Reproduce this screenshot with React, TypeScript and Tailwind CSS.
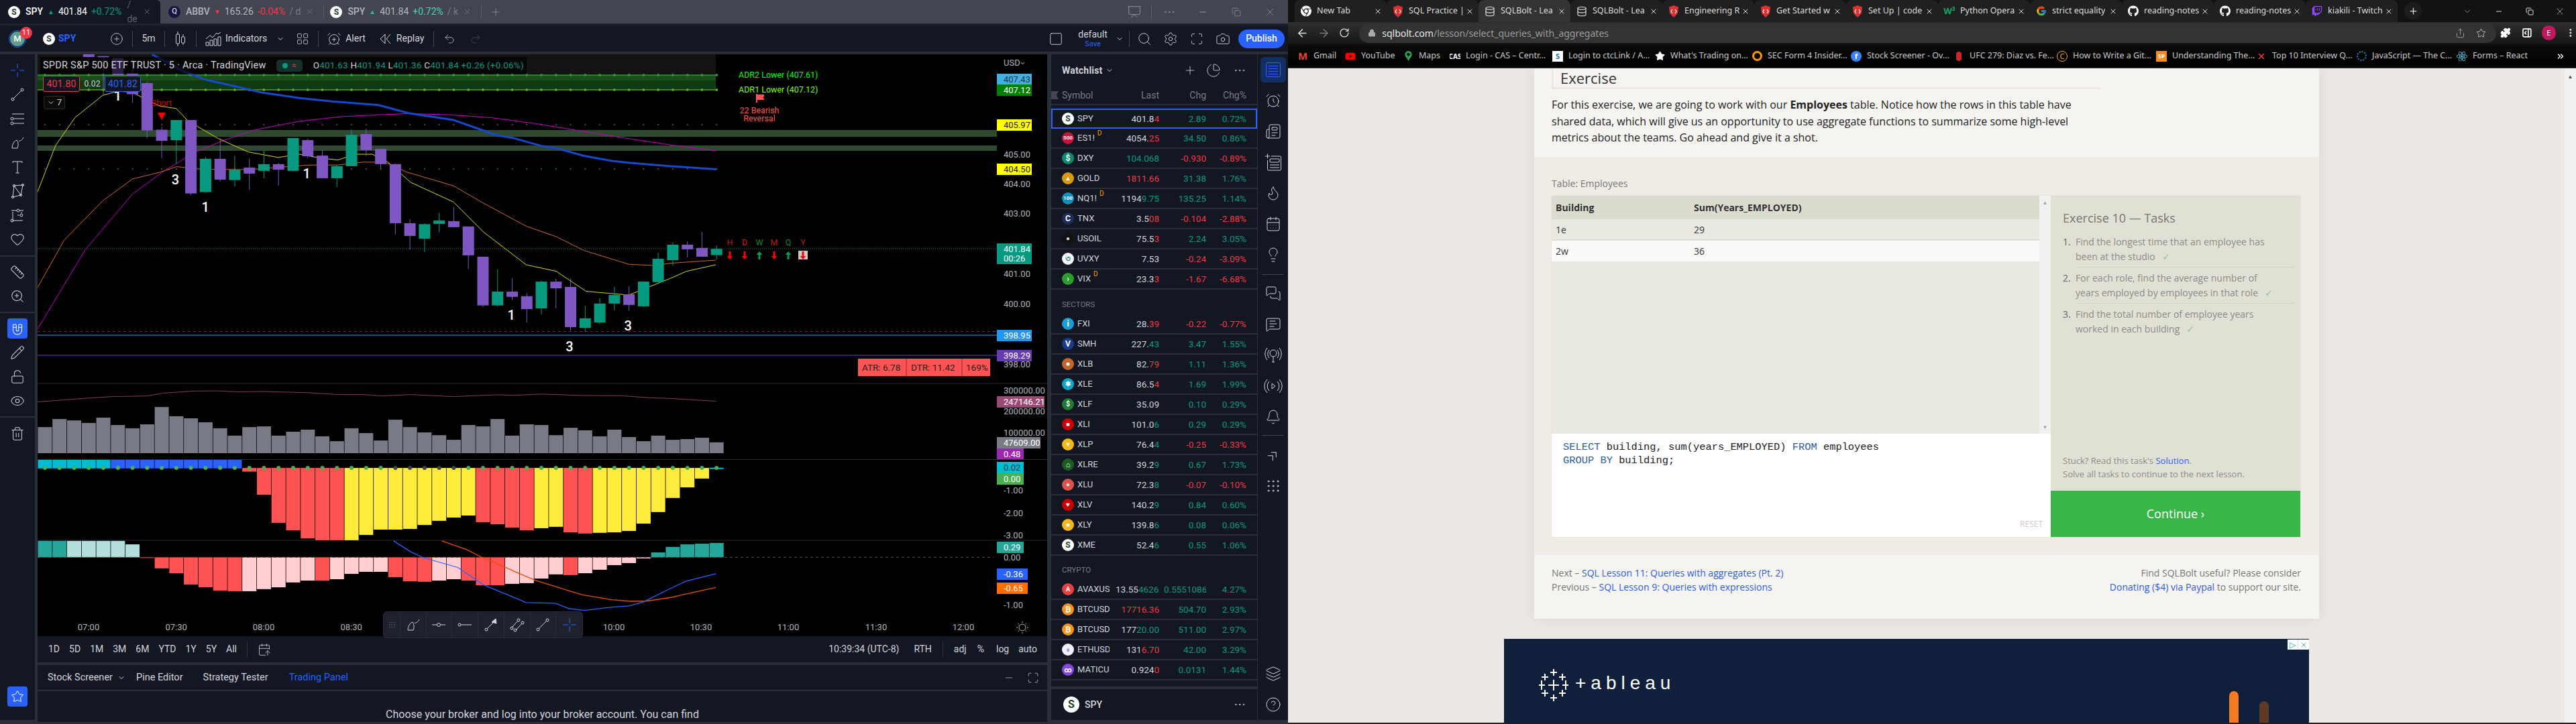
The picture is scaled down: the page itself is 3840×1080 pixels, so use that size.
import React from "react";
import {
  AlarmClock, ArrowLeft, ArrowRight, Bell, CalendarDays, Camera, ChevronDown, ChevronsRight, CircleHelp,
  Database, Ellipsis, EllipsisVertical, Eye, Flame, Heart, Layers, Lightbulb, Lock, LockOpen, Magnet, Maximize, MessageSquareText,
  MessagesSquare, Minus, Newspaper, PanelRightOpen, Pencil, Plus, PlusCircle, Presentation, Puzzle, Redo2, RotateCw, Ruler,
  Search, Settings, Share, Square, Star, Trash2, Undo2, X, ZoomIn, ChartPie, LayoutGrid, AlarmClockPlus, Grip, Copy, CalendarArrowUp,
} from "lucide-react";
import { FaChrome, FaGithub, FaReact, FaTwitch, FaYoutube } from "react-icons/fa";
import { FcGoogle } from "react-icons/fc";
import { SiGooglemaps } from "react-icons/si";

const TEAL = "#089981";
const RED = "#f23645";

/* ---------- chart data (digitised on a 1.568 x 2.904 grid) ---------- */
const zx = (v: number) => v / 1.568;
const zy = (v: number) => v / 2.904;
const ly = (v: number) => 540 + v / 2.904;
const barX = (i: number) => (105 + 34.13 * i) / 1.568;
const pts = (a: number[][], lower = false) => a.map(([x, y]) => `${zx(x)},${lower ? ly(y) : zy(y)}`).join(" ");

const candles: [string, number, number, number, number][] = [
  ["p", 235, 247, 235, 290], ["p", 243, 250, 243, 415], ["p", 252, 325, 252, 400], ["p", 318, 408, 250, 445], ["p", 360, 565, 355, 598],
  ["p", 562, 610, 550, 685], ["g", 520, 607, 520, 710], ["p", 520, 838, 520, 845], ["g", 688, 832, 680, 835], ["p", 688, 778, 598, 786],
  ["g", 735, 780, 675, 808], ["p", 726, 752, 688, 822], ["g", 711, 740, 652, 772], ["p", 711, 735, 705, 804], ["g", 598, 740, 598, 742],
  ["p", 607, 677, 600, 686], ["p", 674, 772, 650, 772], ["g", 720, 772, 715, 810], ["g", 584, 720, 560, 720], ["p", 581, 650, 558, 676],
  ["p", 645, 711, 645, 730], ["p", 711, 967, 708, 1016], ["p", 967, 1022, 950, 1082], ["g", 971, 1034, 968, 1092], ["g", 955, 970, 923, 1005],
  ["p", 958, 984, 897, 985], ["p", 981, 1106, 981, 1165], ["p", 1112, 1323, 1112, 1330], ["g", 1263, 1323, 1167, 1328], ["p", 1263, 1286, 1205, 1300],
  ["p", 1283, 1339, 1270, 1397], ["g", 1220, 1336, 1216, 1362], ["p", 1220, 1249, 1207, 1336], ["p", 1243, 1417, 1205, 1432], ["g", 1379, 1420, 1325, 1436],
  ["g", 1315, 1397, 1292, 1402], ["g", 1278, 1315, 1243, 1344], ["p", 1275, 1321, 1240, 1344], ["g", 1220, 1327, 1218, 1330], ["g", 1121, 1222, 1095, 1222],
  ["g", 1060, 1127, 1050, 1150], ["p", 1060, 1080, 1045, 1115], ["p", 1074, 1112, 1005, 1112], ["g", 1078, 1105, 1063, 1125],
];

const volTops = [282,247,253,264,241,273,287,270,195,235,244,261,287,319,282,279,319,302,293,322,343,287,308,340,250,282,305,317,337,273,279,247,319,270,273,317,285,296,322,293,325,343,319,337,334,328,348];

const squeeze: [number, string][] = [
  [475,"r"],[575,"r"],[697,"r"],[729,"r"],[764,"r"],[772,"r"],[772,"r"],[772,"y"],[749,"y"],[726,"y"],[726,"y"],[723,"y"],[706,"y"],[688,"y"],[674,"y"],[665,"y"],
  [694,"r"],[703,"r"],[717,"r"],[729,"r"],[720,"y"],[714,"y"],[738,"r"],[743,"r"],[740,"y"],[738,"y"],[732,"y"],[700,"y"],[650,"y"],[589,"y"],[543,"y"],[505,"y"],
];

const macd: [number, string][] = [
  [775,"t"],[775,"t"],[775,"l"],[775,"l"],[775,"l"],[775,"l"],[790,"l"],[849,"r"],[894,"r"],[915,"r"],[964,"r"],[976,"r"],[990,"r"],[993,"r"],[993,"p"],[984,"p"],[976,"p"],[955,"p"],[947,"p"],
  [947,"r"],[941,"p"],[918,"p"],[909,"p"],[909,"p"],[932,"r"],[950,"r"],[952,"r"],[947,"p"],[941,"p"],[947,"r"],[967,"r"],[967,"r"],[961,"p"],[958,"p"],[938,"p"],[920,"p"],[923,"r"],[915,"p"],[900,"p"],[880,"p"],[871,"p"],[851,"p"],
  [825,"t"],[801,"t"],[790,"t"],[787,"t"],[784,"t"],
];
const macdFill: Record<string, string> = { t: "#26a69a", l: "#b2dfdb", r: "#ff5252", p: "#ffcdd2" };

const tags: [string, number, number, string, string, number][] = [
  ["407.43", 110, 16, "#3fb1e5", "#23333c", 52], ["407.12", 126, 17, "#008000", "#ffffff", 52], ["405.97", 178, 17, "#ffff00", "#222222", 52], ["404.50", 244, 17, "#ffff00", "#222222", 52],
  ["398.95", 492, 17, "#2196f3", "#ffffff", 52], ["398.29", 522, 17, "#673ab7", "#ffffff", 52],
  ["247146.21", 591, 17, "#9c4a73", "#ffffff", 71], ["47609.00", 652, 17, "#787b86", "#ffffff", 65], ["0.48", 669, 16, "#9c27b0", "#ffffff", 40],
  ["0.02", 689, 17, "#00bcd4", "#14343a", 40], ["0.00", 706, 17, "#4caf50", "#ffffff", 40], ["0.29", 808, 17, "#26a69a", "#ffffff", 40],
  ["-0.36", 848, 17, "#2962ff", "#ffffff", 46], ["-0.65", 869, 17, "#ff6d00", "#ffffff", 46],
];
const scaleText: [string, number][] = [["405.00",230],["404.00",274.5],["403.00",318.5],["401.00",408.5],["400.00",453.5],["398.00",543],["300000.00",582],["200000.00",613],["100000.00",645],["-1.00",731.7],["-2.00",765],["-3.00",798],["0.00",831],["-1.00",902]];

function ChartSvg() {
  return (
    <svg viewBox="56 81 1505 868" width={1505} height={868} className="block" fontFamily="Roboto,sans-serif">
      <rect x="56" y="81" width="1505" height="868" fill="#000" />
      <rect x="56" y="81" width="1011" height="31" fill="#131313" />
      <rect x="56" y="112" width="1011" height="8" fill="#1d4d1d" />
      <rect x="56" y="120" width="1011" height="14" fill="#0f3b0f" />
      <rect x="56" y="194" width="1430" height="10" fill="#2f4a30" />
      <rect x="56" y="217" width="1430" height="8" fill="#2f4a30" />
      <line x1="56" x2="1067" y1="112" y2="112" stroke="#31d331" strokeWidth="1" />
      <line x1="56" x2="1067" y1="134" y2="134" stroke="#7fe01a" strokeWidth="1" />
      {Array.from({ length: 47 }, (_, i) => (
        <g key={i}>
          <circle cx={barX(i)} cy="112" r="2" fill="#2a9a2a" />
          <circle cx={barX(i)} cy="134" r="2" fill="#5da514" />
          <circle cx={barX(i)} cy="186" r="1.2" fill="#4a4a1c" />
          <circle cx={barX(i)} cy="252" r="1.2" fill="#4a4a1c" />
        </g>
      ))}
      <line x1="56" x2="1486" y1="371" y2="371" stroke="#089981" strokeDasharray="1 2" />
      <line x1="56" x2="1486" y1="494.5" y2="494.5" stroke="#880e4f" strokeDasharray="4 4" />
      <line x1="56" x2="1486" y1="500" y2="500" stroke="#1e6aa8" strokeWidth="1.5" />
      <line x1="56" x2="1486" y1="530" y2="530" stroke="#4a2a85" strokeWidth="1.5" />

      <polyline fill="none" stroke="#c800c8" strokeWidth="1" points={pts([[88,1425],[200,1080],[310,840],[380,745],[450,665],[520,610],[590,565],[700,525],[800,505],[950,492],[1050,497],[1150,510],[1250,535],[1350,565],[1450,595],[1568,628],[1673,653]])} />
      <polyline fill="none" stroke="#d2691e" strokeWidth="1" points={pts([[88,1245],[150,1040],[240,870],[310,775],[370,748],[413,722],[470,733],[580,735],[650,725],[720,715],[790,715],[850,702],[900,703],[950,745],[1060,805],[1130,880],[1230,980],[1300,1025],[1365,1085],[1470,1145],[1530,1150],[1568,1140],[1673,1127]])} />
      <polyline fill="none" stroke="#d8d800" strokeWidth="1" points={pts([[88,830],[130,630],[175,510],[240,413],[275,395],[310,400],[345,435],[375,460],[412,470],[440,525],[510,600],[580,658],[650,682],[700,668],[750,685],[790,693],[830,668],[870,668],[905,700],[960,790],[1060,875],[1130,1005],[1230,1147],[1300,1175],[1370,1262],[1470,1278],[1568,1205],[1605,1175],[1673,1147]])} />

      {candles.map(([c, t, b, wt, wb], k) => {
        const i = k + 3;
        const col = c === "p" ? "#7e57c2" : "#089981";
        return (
          <g key={k}>
            <line x1={barX(i)} x2={barX(i)} y1={zy(wt)} y2={zy(wb)} stroke={col} strokeWidth="1" />
            <rect x={barX(i) - 8.5} y={zy(t)} width="17" height={zy(b) - zy(t)} fill={col} />
          </g>
        );
      })}
      <polyline fill="none" stroke="#1848cc" strokeWidth="3" points={pts([[355,235],[430,310],[480,345],[560,378],[610,400],[700,425],[780,440],[885,455],[955,490],[1060,520],[1160,585],[1200,598],[1265,632],[1300,642],[1365,675],[1430,697],[1470,705],[1568,720],[1675,733]])} />

      {[[275,415,"1"],[410,778,"3"],[480,898,"1"],[717,752,"1"],[1195,1365,"1"],[1468,1412,"3"],[1331,1500,"3"]].map(([x, y, t], i) => (
        <text key={i} x={zx(x as number)} y={zy(y as number) + 7} textAnchor="middle" fill="#fff" fontSize="20" fontWeight="500">{t}</text>
      ))}
      <text x={zx(378)} y={zy(447) + 4} textAnchor="middle" fill="#d50000" fontSize="12.5">Short</text>
      <path d="M235 168h12l-6 11z" fill="#ff0000" />

      <text x="1101" y="116" fill="#00ff00" fontSize="12.5">ADR2 Lower (407.61)</text>
      <text x="1101" y="138" fill="#7cfc00" fontSize="12.5">ADR1 Lower (407.12)</text>
      <path d="M1127 140h2v13h-2zM1129 141h10v3l-2 1 2 2v2h-10z" fill="#ff5252" />
      <text x="1132" y="169" textAnchor="middle" fill="#ff5252" fontSize="12.5">22 Bearish</text>
      <text x="1132" y="181" textAnchor="middle" fill="#ff5252" fontSize="12.5">Reversal</text>

      {[["H",1088,"#b71c1c","d"],["D",1110,"#d01818","d"],["W",1132,"#0a8a3a","u"],["M",1154,"#b71c1c","d"],["Q",1175,"#0a8a3a","u"],["Y",1197,"#b71c1c","d"]].map(([t, x, c, d]) => {
        const xx = x as number;
        return (
          <g key={t as string}>
            <text x={xx} y="366" textAnchor="middle" fill={c as string} fontSize="12.5">{t}</text>
            {t === "Y" && <rect x={xx - 7} y="374" width="14" height="13" fill="#c9c9c9" />}
            {d === "d"
              ? <path d={`M${xx - 1.5} 375h3v7h3l-4.5 5-4.5-5h3z`} fill="#ff0000" />
              : <path d={`M${xx - 1.5} 387h3v-7h3l-4.5-5-4.5 5h3z`} fill="#089c4c" />}
          </g>
        );
      })}

      <line x1="56" x2="1561" y1="572" y2="572" stroke="#2a2e39" strokeWidth="1" />
      <line x1="56" x2="1561" y1="685.5" y2="685.5" stroke="#2a2e39" strokeWidth="1" />
      <line x1="56" x2="1561" y1="806" y2="806" stroke="#2a2e39" strokeWidth="1" />

      <polyline fill="none" stroke="#803a5f" strokeWidth="1" points={pts([[88,173],[200,157],[260,150],[345,147],[380,135],[450,126],[510,125],[550,129],[620,128],[720,133],[790,141],[850,141],[890,147],[960,141],[1060,150],[1160,142],[1200,144],[1265,139],[1360,145],[1450,146],[1520,155],[1568,158],[1673,170]], true)} />
      {volTops.map((t, i) => <rect key={i} x={barX(i) - 10.5} y={ly(t)} width="21" height={ly(395) - ly(t)} fill="#787b86" />)}

      {Array.from({ length: 14 }, (_, i) => <rect key={i} x={barX(i) - 10.5} y={ly(424)} width="21" height={ly(461) - ly(424)} fill={i < 5 ? "#00bcd4" : "#2962ff"} />)}
      {squeeze.map(([t, c], i) => <rect key={i} x={barX(i + 14) - 10.5} y={ly(459)} width="21" height={ly(t) - ly(459)} fill={c === "r" ? "#ff5252" : "#ffeb3b"} />)}
      <rect x={barX(46) - 10.5} y={ly(458)} width="21" height="2" fill="#00bcd4" />
      {Array.from({ length: 47 }, (_, i) => <ellipse key={i} cx={barX(i)} cy={ly(459)} rx="3" ry="3" fill={i >= 24 && i <= 28 ? "#434651" : "#4caf50"} />)}

      {macd.map(([t, c], i) => {
        const y0 = ly(846);
        const y1 = ly(t);
        return <rect key={i} x={barX(i) - 10.5} y={Math.min(y0, y1)} width="21" height={Math.abs(y1 - y0)} fill={macdFill[c]} />;
      })}
      <line x1="56" x2="1481" y1={ly(846)} y2={ly(846)} stroke="#555" strokeDasharray="4 4" />
      <polyline fill="none" stroke="#e65100" strokeWidth="1.3" points={pts([[1033,775],[1090,812],[1125,845],[1250,945],[1360,1008],[1430,1030],[1470,1036],[1510,1036],[1568,1020],[1603,1005],[1673,977]], true)} />
      <polyline fill="none" stroke="#2962ff" strokeWidth="1.3" points={pts([[920,775],[960,822],[990,848],[1070,890],[1130,965],[1230,1042],[1298,1045],[1330,1068],[1365,1076],[1430,1062],[1470,1057],[1503,1040],[1568,980],[1603,950],[1673,917]], true)} />

      <rect x="1279" y="535" width="197" height="26" fill="#ff5252" />
      <line x1="1351" x2="1351" y1="535" y2="561" stroke="#222" strokeWidth="0.6" />
      <line x1="1434" x2="1434" y1="535" y2="561" stroke="#222" strokeWidth="0.6" />
      <text x="1285" y="553" fill="#222" fontSize="13.5">ATR: 6.78</text>
      <text x="1358" y="553" fill="#222" fontSize="13.5">DTR: 11.42</text>
      <text x="1440" y="553" fill="#222" fontSize="13.5">169%</text>

      <text x="1496" y="98" fill="#b2b5be" fontSize="13">USD</text>
      <path d="M1522 93l2.5 3 2.5-3" fill="none" stroke="#b2b5be" />
      {scaleText.map(([t, y], i) => <text key={i} x="1496" y={y + 4.5} fill="#b2b5be" fontSize="13">{t}</text>)}
      {tags.map(([t, y, h, bg, fg, w]) => (
        <g key={t + y}>
          <rect x="1486" y={y} width={w} height={h} fill={bg} />
          <text x="1496" y={y + h / 2 + 4.5} fill={fg} fontSize="13">{t}</text>
        </g>
      ))}
      <rect x="1486" y="363" width="52" height="31" fill={TEAL} />
      <text x="1496" y="376" fill="#fff" fontSize="13">401.84</text>
      <text x="1496" y="390" fill="#fff" fontSize="13">00:26</text>

      {[["07:00",132],["07:30",262.7],["08:00",393],["08:30",523.6],["10:00",915],["10:30",1045],["11:00",1175],["11:30",1306],["12:00",1436]].map(([t, x]) => (
        <text key={t as string} x={x as number} y="939.5" textAnchor="middle" fill="#b2b5be" fontSize="13">{t}</text>
      ))}
      <g transform="translate(1524 936)" stroke="#b2b5be" fill="none">
        <circle r="5" />
        <path d="M0-9v2M0 7v2M-9 0h2M7 0h2M-6-6l1.5 1.5M4.5 4.5L6 6M-6 6l1.5-1.5M4.5-4.5L6-6" />
      </g>
    </svg>
  );
}

/* ---------- small helpers ---------- */
function SLogo({ size = "s" }: { size?: "s" | "l" }) {
  return (
    <span className={size === "s" ? "flex h-[18px] w-[18px] shrink-0 items-center justify-center rounded-full bg-white text-[12px] font-bold leading-none text-[#1e3a2f]" : "flex h-[24px] w-[24px] shrink-0 items-center justify-center rounded-full bg-white text-[16px] font-bold leading-none text-[#1e3a2f]"}>S</span>
  );
}

function RailBtn({ children, active }: { children: React.ReactNode; active?: boolean }) {
  return (
    <div className="flex h-[36px] w-full items-center justify-center">
      <div className={active ? "flex h-[30px] w-[30px] items-center justify-center rounded-[4px] bg-[#2962ff] text-white" : "flex h-[30px] w-[30px] items-center justify-center text-[#d1d4dc]"}>{children}</div>
    </div>
  );
}

function LeftRail() {
  const s = { size: 22, strokeWidth: 1.1 };
  return (
    <div className="flex w-[52px] shrink-0 flex-col bg-[#131722] pb-[17px]">
      <div className="pt-[6px]">
        <RailBtn>
          <svg width="22" height="22" viewBox="0 0 22 22" fill="none"><path d="M11 1v7M11 14v7M1 11h7M14 11h7" stroke="#2962ff" /></svg>
        </RailBtn>
        <RailBtn><svg width="24" height="24" viewBox="0 0 24 24" fill="none" stroke="currentColor"><path d="M6 18L18 6" /><circle cx="5" cy="19" r="2" /><circle cx="19" cy="5" r="2" /></svg></RailBtn>
        <RailBtn><svg width="24" height="24" viewBox="0 0 24 24" fill="none" stroke="currentColor"><path d="M4 5h18M6 12h16M6 19h16" /><circle cx="4" cy="12" r="2" /><circle cx="4" cy="19" r="2" /></svg></RailBtn>
        <RailBtn><svg width="24" height="24" viewBox="0 0 24 24" fill="none" stroke="currentColor"><path d="M4 20c0-5 3-11 7-12 2 3 3 7 1 12zM14 9c2 1 5-1 7-5" /></svg></RailBtn>
        <RailBtn><svg width="24" height="24" viewBox="0 0 24 24" fill="none" stroke="currentColor"><path d="M5 6V4h14v2M12 4v17M9.5 21h5" /></svg></RailBtn>
        <RailBtn><svg width="24" height="24" viewBox="0 0 24 24" fill="none" stroke="currentColor"><path d="M5 21L7 4l10 14L20 3M5 21l12-3M7 4l13-1" /><circle cx="5" cy="21" r="1.6" /><circle cx="7" cy="4" r="1.6" /><circle cx="17" cy="18" r="1.6" /><circle cx="20" cy="3" r="1.6" /></svg></RailBtn>
        <RailBtn><svg width="24" height="24" viewBox="0 0 24 24" fill="none" stroke="currentColor"><path d="M3 5h8M15 5h6M4 20h16M12 12h3M5 7v11M18 7v2" /><circle cx="4" cy="20" r="2" /><circle cx="13" cy="5" r="2" /><circle cx="18" cy="12" r="2" /></svg></RailBtn>
        <RailBtn><Heart {...s} /></RailBtn>
      </div>
      <div className="mt-[6px] h-[2px] bg-[#2a2e39]" />
      <div className="pt-[5px]">
        <RailBtn><Ruler {...s} /></RailBtn>
        <RailBtn><ZoomIn {...s} /></RailBtn>
      </div>
      <div className="mt-[5px] h-[2px] bg-[#2a2e39]" />
      <div className="pt-[5px]">
        <RailBtn active><Magnet size={20} strokeWidth={1.2} className="rotate-[135deg]" /></RailBtn>
        <RailBtn><Pencil {...s} /></RailBtn>
        <RailBtn><LockOpen {...s} /></RailBtn>
        <RailBtn><Eye {...s} /></RailBtn>
      </div>
      <div className="mt-[5px] h-[2px] bg-[#2a2e39]" />
      <div className="pt-[6px]">
        <RailBtn><Trash2 {...s} /></RailBtn>
      </div>
      <div className="mt-auto">
        <RailBtn active><Star size={20} strokeWidth={1.2} /></RailBtn>
      </div>
    </div>
  );
}

function RRBtn({ children, active }: { children: React.ReactNode; active?: boolean }) {
  return (
    <div className="flex h-[46px] w-full items-center justify-center">
      <div className={active ? "flex h-[38px] w-[38px] items-center justify-center rounded-[6px] bg-[#142e61] text-[#2962ff]" : "flex h-[38px] w-[38px] items-center justify-center text-[#d1d4dc]"}>{children}</div>
    </div>
  );
}

const PlayWaves = (
  <svg width="28" height="24" viewBox="0 0 28 24" fill="none" stroke="currentColor"><path d="M12 8l5 4-5 4z" /><path d="M8 5a10 10 0 0 0 0 14M20 5a10 10 0 0 1 0 14M5 2a14 14 0 0 0 0 20M23 2a14 14 0 0 1 0 20" /></svg>
);
const Bulb2 = (
  <svg width="28" height="24" viewBox="0 0 28 24" fill="none" stroke="currentColor"><circle cx="14" cy="9" r="5" /><path d="M14 14v8M12 22h4M8 4a9 9 0 0 0 0 12M20 4a9 9 0 0 1 0 12M5 1a14 14 0 0 0 0 18M23 1a14 14 0 0 1 0 18" /></svg>
);

function RightRail() {
  const s = { size: 24, strokeWidth: 1 };
  return (
    <div className="flex w-[45px] shrink-0 flex-col bg-[#131722]">
      <RRBtn active>
        <svg width="24" height="24" viewBox="0 0 24 24" fill="none" stroke="currentColor"><rect x="1.5" y="1.5" width="21" height="21" rx="2" /><path d="M5 6.5h14M5 10.5h14M5 14.5h14M5 18.5h14" /></svg>
      </RRBtn>
      <RRBtn><AlarmClock {...s} /></RRBtn>
      <RRBtn><Newspaper {...s} /></RRBtn>
      <RRBtn>
        <svg width="26" height="26" viewBox="0 0 26 26" fill="none" stroke="currentColor"><path d="M1 4h7M4.5 0.5v7M10 4h13a1.5 1.5 0 0 1 1.5 1.5v18a1.5 1.5 0 0 1-1.5 1.5H6a1.5 1.5 0 0 1-1.5-1.5V10" /><rect x="8" y="8" width="14" height="5" rx="1" /><path d="M8 17h14M8 21h14" /></svg>
      </RRBtn>
      <RRBtn><Flame {...s} /></RRBtn>
      <RRBtn><CalendarDays {...s} /></RRBtn>
      <RRBtn><Lightbulb {...s} /></RRBtn>
      <div className="mx-[6px] mt-[6px] mb-[5px] h-[1px] bg-[#434651]" />
      <RRBtn><MessagesSquare {...s} /></RRBtn>
      <RRBtn><MessageSquareText {...s} /></RRBtn>
      <RRBtn>{Bulb2}</RRBtn>
      <RRBtn>{PlayWaves}</RRBtn>
      <RRBtn><Bell {...s} /></RRBtn>
      <div className="mx-[6px] mt-[4px] mb-[6px] h-[1px] bg-[#434651]" />
      <RRBtn><ChevronsRight size={24} strokeWidth={1} className="-rotate-45" /></RRBtn>
      <RRBtn><Grip {...s} /></RRBtn>
      <div className="mt-auto" />
      <RRBtn><Layers {...s} /></RRBtn>
      <RRBtn><CircleHelp {...s} /></RRBtn>
    </div>
  );
}

type Row = { s: string; d?: boolean; a: string; b?: string; bc?: string; c: string; p: string; up: boolean; bg: string; g: string; fg?: string; fs?: string };

const U = TEAL;
const D = RED;
const R1: Row[] = [
  { s: "SPY", a: "401.8", b: "4", bc: D, c: "2.89", p: "0.72%", up: true, bg: "#ffffff", g: "S", fg: "#1e3a2f" },
  { s: "ES1!", d: true, a: "4054.", b: "25", bc: D, c: "34.50", p: "0.86%", up: true, bg: "#c2163a", g: "500", fs: "text-[8px]" },
  { s: "DXY", a: "", b: "104.068", bc: U, c: "-0.930", p: "-0.89%", up: false, bg: "#0d8a72", g: "$" },
  { s: "GOLD", a: "", b: "1811.66", bc: D, c: "31.38", p: "1.76%", up: true, bg: "#d99a0c", g: "▲", fs: "text-[9px]" },
  { s: "NQ1!", d: true, a: "1194", b: "9.75", bc: U, c: "135.25", p: "1.14%", up: true, bg: "#0e8fbf", g: "100", fs: "text-[8px]" },
  { s: "TNX", a: "3.5", b: "08", bc: D, c: "-0.104", p: "-2.88%", up: false, bg: "#1c2d5a", g: "C" },
  { s: "USOIL", a: "75.5", b: "3", bc: D, c: "2.24", p: "3.05%", up: true, bg: "#121212", g: "●", fs: "text-[9px]" },
  { s: "UVXY", a: "7.53", c: "-0.24", p: "-3.09%", up: false, bg: "#f4f6f6", g: "৩", fg: "#1c7c8c" },
  { s: "VIX", d: true, a: "23.3", b: "3", bc: D, c: "-1.67", p: "-6.68%", up: false, bg: "#2a9e2a", g: "›" },
];
const R2: Row[] = [
  { s: "FXI", a: "28.", b: "39", bc: D, c: "-0.22", p: "-0.77%", up: false, bg: "#1b9dd9", g: "i" },
  { s: "SMH", a: "227.", b: "43", bc: U, c: "3.47", p: "1.55%", up: true, bg: "#1b3a8c", g: "V" },
  { s: "XLB", a: "82.", b: "79", bc: D, c: "1.11", p: "1.36%", up: true, bg: "#c4662a", g: "■", fs: "text-[9px]" },
  { s: "XLE", a: "86.5", b: "4", bc: D, c: "1.69", p: "1.99%", up: true, bg: "#0ea5c9", g: "✱", fs: "text-[10px]" },
  { s: "XLF", a: "35.09", c: "0.10", p: "0.29%", up: true, bg: "#1e7a34", g: "$", fs: "text-[10px]" },
  { s: "XLI", a: "101.0", b: "6", bc: U, c: "0.29", p: "0.29%", up: true, bg: "#cc0000", g: "■", fs: "text-[9px]" },
  { s: "XLP", a: "76.4", b: "4", bc: U, c: "-0.25", p: "-0.33%", up: false, bg: "#f4b819", g: "▼", fs: "text-[9px]" },
  { s: "XLRE", a: "39.2", b: "9", bc: U, c: "0.67", p: "1.73%", up: true, bg: "#1b5e20", g: "⌂", fs: "text-[11px]" },
  { s: "XLU", a: "72.3", b: "8", bc: U, c: "-0.07", p: "-0.10%", up: false, bg: "#d9534f", g: "●", fs: "text-[9px]" },
  { s: "XLV", a: "140.2", b: "9", bc: U, c: "0.84", p: "0.60%", up: true, bg: "#cc0000", g: "♥", fs: "text-[10px]" },
  { s: "XLY", a: "139.8", b: "6", bc: U, c: "0.08", p: "0.06%", up: true, bg: "#f4b819", g: "■", fs: "text-[9px]" },
  { s: "XME", a: "52.4", b: "6", bc: U, c: "0.55", p: "1.06%", up: true, bg: "#ffffff", g: "S", fg: "#1e3a2f" },
];
const R3: Row[] = [
  { s: "AVAXUSD", a: "13.55", b: "46269", bc: U, c: "0.5551086", p: "4.27%", up: true, bg: "#e84142", g: "A", fs: "text-[9px]" },
  { s: "BTCUSD", a: "", b: "17716.36", bc: D, c: "504.70", p: "2.93%", up: true, bg: "#f7931a", g: "₿", fs: "text-[11px]" },
  { s: "BTCUSD", a: "177", b: "20.00", bc: U, c: "511.00", p: "2.97%", up: true, bg: "#f7931a", g: "₿", fs: "text-[11px]" },
  { s: "ETHUSD", a: "131", b: "6.70", bc: D, c: "42.00", p: "3.29%", up: true, bg: "#eef0fb", g: "♦", fg: "#8f9ae0", fs: "text-[11px]" },
  { s: "MATICUSD", a: "0.924", b: "0", bc: D, c: "0.0131", p: "1.44%", up: true, bg: "#8247e5", g: "∞", fs: "text-[11px]" },
  { s: "SOLUSD", a: "13.5", b: "177", bc: D, c: "-0.0880", p: "-0.70%", up: false, bg: "#16181f", g: "≡", fs: "text-[10px]" },
];

function WRow({ r, sel }: { r: Row; sel?: boolean }) {
  const col = r.up ? "text-[#089981]" : "text-[#f23645]";
  return (
    <div className={sel ? "flex h-[30px] items-center border-2 border-[#2962ff] pl-[14px] pr-[14px] text-[13.5px]" : "flex h-[30px] items-center border-b-2 border-[#2a2e39] pl-[16px] pr-[16px] text-[13.5px]"}>
      <span className={`flex h-[18px] w-[18px] shrink-0 items-center justify-center overflow-hidden rounded-full font-bold leading-none ${r.fs ?? "text-[12px]"}`} style={{ background: r.bg, color: r.fg ?? "#ffffff" }}>{r.g}</span>
      <div className={r.d ? "ml-[5px] flex w-[48px] shrink-0 whitespace-nowrap text-[13px] text-[#d1d4dc]" : "ml-[5px] w-[48px] shrink-0 overflow-hidden whitespace-nowrap text-[13px] text-[#d1d4dc]"}>
        <span>{r.s}</span>
        {r.d && <span className="mt-[-4px] ml-[4px] text-[10px] leading-[14px] text-[#ff9800]">D</span>}
      </div>
      <div className="ml-[9px] w-[65px] shrink-0 overflow-hidden whitespace-nowrap text-right text-[#d1d4dc]">
        {r.a}
        {r.b && <span style={{ color: r.bc }}>{r.b}</span>}
      </div>
      <div className={`ml-[7px] w-[63px] shrink-0 overflow-hidden whitespace-nowrap text-right ${col}`}>{r.c}</div>
      <div className={`w-[60px] shrink-0 text-right ${col}`}>{r.p}</div>
    </div>
  );
}

function Watchlist() {
  return (
    <div className="flex w-[307px] shrink-0 flex-col bg-[#131722]">
      <div className="flex-1 overflow-hidden">
        <div className="flex h-[48px] items-center pl-[16px] pr-[16px] text-[#d1d4dc]">
          <span className="text-[14px] font-bold tracking-[0.2px]">Watchlist</span>
          <ChevronDown size={12} className="ml-[4px]" />
          <Plus size={20} strokeWidth={1} className="ml-auto" />
          <ChartPie size={22} strokeWidth={1} className="ml-[14px]" />
          <Ellipsis size={20} strokeWidth={1} className="ml-[18px]" />
        </div>
        <div className="flex h-[28px] items-center border-b-2 border-[#2a2e39] pl-[16px] pr-[16px] text-[14px] text-[#787b86]">
          <span className="-ml-[16px] mr-[5px] h-[12px] w-[11px] bg-[#434651] [clip-path:polygon(0_0,100%_0,70%_50%,100%_100%,0_100%)]" />
          <span className="w-[73px]">Symbol</span>
          <span className="w-[72px] text-right">Last</span>
          <span className="w-[70px] text-right">Chg</span>
          <span className="w-[60px] text-right">Chg%</span>
        </div>
        <div className="h-[5px]" />
        {R1.map((r, i) => <WRow key={r.s} r={r} sel={i === 0} />)}
        <div className="flex h-[37px] items-center pl-[16px] pt-[8px] text-[11.5px] text-[#787b86]">SECTORS</div>
        {R2.map((r) => <WRow key={r.s} r={r} />)}
        <div className="flex h-[36px] items-center pl-[16px] pt-[8px] text-[11.5px] text-[#787b86]">CRYPTO</div>
        {R3.map((r, i) => <WRow key={i} r={r} />)}
      </div>
      <div className="h-[4px] shrink-0 bg-[#2a2e39]" />
      <div className="flex h-[46px] shrink-0 items-center pl-[18px] pr-[16px] text-[#d1d4dc]">
        <SLogo size="l" />
        <span className="ml-[8px] text-[14px] font-medium">SPY</span>
        <Ellipsis size={20} strokeWidth={1} className="ml-auto" />
      </div>
    </div>
  );
}

function Sep({ cls }: { cls: string }) {
  return <span className={`h-[24px] w-[1px] shrink-0 bg-[#434651] ${cls}`} />;
}

function TvTabBar() {
  return (
    <div className="flex h-[35px] shrink-0 items-center bg-[#434651] text-[14px] text-[#b2b5be]">
      <div className="flex h-full w-[239px] shrink-0 items-center rounded-tr-[6px] bg-[#131722] pl-[12px] text-white">
        <SLogo />
        <span className="ml-[8px] font-medium">SPY</span>
        <span className="ml-[7px] text-[10px] text-[#089981]">▲</span>
        <span className="ml-[6px]">401.84</span>
        <span className="ml-[6px] text-[#089981]">+0.72%</span>
        <span className="ml-[8px] text-[#5d606b]">/ de</span>
        <X size={13} strokeWidth={1.2} className="ml-auto mr-[14px] text-[#9598a1]" />
      </div>
      <span className="ml-[12px] flex h-[18px] w-[18px] shrink-0 items-center justify-center rounded-full bg-[#15153f] text-[11px] text-white">Q</span>
      <span className="ml-[8px] font-medium">ABBV</span>
      <span className="ml-[6px] text-[10px] text-[#f23645]">▼</span>
      <span className="ml-[6px]">165.26</span>
      <span className="ml-[6px] text-[#f23645]">-0.04%</span>
      <span className="ml-[6px] text-[#787b86]">/ d</span>
      <X size={13} strokeWidth={1} className="ml-[7px] text-[#9598a1]" />
      <span className="ml-[14px] h-[18px] w-[1px] bg-[#5d606b]" />
      <span className="ml-[9px]"><SLogo /></span>
      <span className="ml-[8px] font-medium">SPY</span>
      <span className="ml-[6px] text-[10px] text-[#2bb8a0]">▲</span>
      <span className="ml-[6px]">401.84</span>
      <span className="ml-[6px] text-[#4fd1b8]">+0.72%</span>
      <span className="ml-[6px] text-[#787b86]">/ k</span>
      <X size={13} strokeWidth={1} className="ml-[7px] text-[#9598a1]" />
      <span className="ml-[14px] h-[18px] w-[1px] bg-[#5d606b]" />
      <Plus size={18} strokeWidth={1} className="ml-[12px] text-[#9598a1]" />
      <div className="ml-auto flex items-center pr-[18px] text-[#9598a1]">
        <Presentation size={22} strokeWidth={1} />
        <span className="ml-[14px] h-[22px] w-[1px] bg-[#5d606b]" />
        <Ellipsis size={20} strokeWidth={1} className="ml-[16px]" />
        <Minus size={14} className="ml-[33px]" />
        <Copy size={14} strokeWidth={1.2} className="ml-[36px]" />
        <X size={18} strokeWidth={1} className="ml-[34px]" />
      </div>
    </div>
  );
}

const CandleIc = (
  <svg width="20" height="24" viewBox="0 0 20 24" fill="none" stroke="currentColor"><path d="M6 1v4M6 19v4M14 5v4M14 18v3" /><rect x="3.5" y="5" width="5" height="14" rx="1" /><rect x="11.5" y="9" width="5" height="9" rx="1" /></svg>
);
const IndIc = (
  <svg width="24" height="24" viewBox="0 0 24 24" fill="none" stroke="currentColor"><path d="M1 12l6-5 4 3 6-7 2 2 4-3" /><path d="M1 22h4v-5H1zM7 22h4v-8H7zM13 22h4V12h-4zM19 22h4V9h-4z" /></svg>
);
const ReplayIc = (
  <svg width="20" height="20" viewBox="0 0 20 20" fill="none" stroke="currentColor"><path d="M9 3L2 10l7 7zM17 3l-6 7 6 7" /></svg>
);

function TvToolbar() {
  return (
    <div className="flex h-[39px] shrink-0 items-center bg-[#131722] text-[14px] text-[#d1d4dc]">
      <div className="relative ml-[13px] flex h-[26px] w-[26px] shrink-0 items-center justify-center rounded-full border border-[#2962ff] bg-[#131722]">
        <span className="flex h-[22px] w-[22px] items-center justify-center rounded-full bg-[#5f9d8c] text-[13px] font-medium text-white">M</span>
        <span className="absolute -right-[10px] -top-[6px] flex h-[18px] w-[18px] items-center justify-center rounded-full bg-[#f23645] text-[11px] font-normal leading-none text-white">11</span>
      </div>
      <span className="ml-[25px]"><SLogo /></span>
      <span className="ml-[5px] w-[75px] text-[14px] font-bold text-[#2962ff]">SPY</span>
      <PlusCircle size={20} strokeWidth={1} className="ml-[2px]" />
      <Sep cls="ml-[13px]" />
      <span className="w-[47px] text-center">5m</span>
      <Sep cls="" />
      <span className="ml-[13px]">{CandleIc}</span>
      <Sep cls="ml-[13px]" />
      <span className="ml-[13px]">{IndIc}</span>
      <span className="ml-[6px]">Indicators</span>
      <ChevronDown size={12} className="ml-[14px]" />
      <LayoutGrid size={20} strokeWidth={1} className="ml-[17px]" />
      <Sep cls="ml-[13px]" />
      <AlarmClockPlus size={22} strokeWidth={1} className="ml-[12px]" />
      <span className="ml-[6px]">Alert</span>
      <span className="ml-[20px]">{ReplayIc}</span>
      <span className="ml-[6px]">Replay</span>
      <Sep cls="ml-[14px]" />
      <Undo2 size={18} strokeWidth={1} className="ml-[14px]" />
      <Redo2 size={18} strokeWidth={1} className="ml-[21px] text-[#50535e]" />
      <div className="ml-auto flex items-center">
        <Square size={22} strokeWidth={1} />
        <div className="ml-[18px] flex w-[52px] flex-col items-center leading-none">
          <span className="text-[14px]">default</span>
          <span className="mt-[2px] text-[11px] text-[#2962ff]">Save</span>
        </div>
        <ChevronDown size={12} className="ml-[8px]" />
        <Sep cls="ml-[8px]" />
        <Search size={22} strokeWidth={1} className="ml-[11px]" />
        <Settings size={22} strokeWidth={1} className="ml-[17px]" />
        <Maximize size={20} strokeWidth={1} className="ml-[18px]" />
        <Camera size={22} strokeWidth={1} className="ml-[18px]" />
        <span className="ml-[12px] mr-[5px] flex h-[28px] w-[69px] items-center justify-center rounded-full bg-[#2962ff] text-[14px] font-medium text-white">Publish</span>
      </div>
    </div>
  );
}

function ChartPanel() {
  return (
    <div className="relative h-[868px] shrink-0 bg-black">
      <ChartSvg />
      <div className="absolute left-[4px] top-[4px] flex h-[25px] w-[725px] items-center whitespace-nowrap bg-[#000000a8] pl-[4px] text-[14.5px] text-[#d1d4dc]">
        <span className="tracking-[0.25px]">SPDR S&amp;P 500 ETF TRUST · 5 · Arca · TradingView</span>
        <span className="ml-[15px] flex h-[18px] w-[39px] items-center justify-center gap-[6px] rounded-[5px] bg-[#16302c]">
          <span className="h-[8px] w-[8px] rounded-full bg-[#089981]" />
          <span className="text-[11px] leading-none text-[#f23645]">≈</span>
        </span>
        <span className="ml-[16px] text-[13.5px] tracking-[0.2px]">
          <span>O</span><span className="text-[#089981]">401.63 </span>
          <span>H</span><span className="text-[#089981]">401.94 </span>
          <span>L</span><span className="text-[#089981]">401.36 </span>
          <span>C</span><span className="text-[#089981]">401.84 +0.26 (+0.06%)</span>
        </span>
      </div>
      <div className="absolute left-[8px] top-[32px] flex h-[24px] items-center text-[14px] tracking-[0.2px]">
        <span className="flex h-[24px] w-[55px] items-center justify-center rounded-[3px] border border-[#f23645] bg-[#131722] text-[#f23645]">401.80</span>
        <span className="w-[37px] text-center text-[12px] text-[#d1d4dc]">0.02</span>
        <span className="flex h-[24px] w-[54px] items-center justify-center rounded-[3px] border border-[#2962ff] bg-[#131722] text-[#2962ff]">401.82</span>
      </div>
      <div className="absolute left-[9px] top-[62px] flex h-[20px] w-[32px] items-center justify-center gap-[3px] rounded-[3px] border border-[#2a2e39] bg-[#0b0b0b] text-[13px] text-[#d1d4dc]">
        <ChevronDown size={12} />7
      </div>
      <div className="absolute left-[515px] top-[831px] flex h-[40px] w-[298px] items-center rounded-[6px] border border-[#2a2e39] bg-[#1e222d] text-[#d1d4dc]">
        <span className="flex h-full w-[25px] items-center justify-center border-r border-[#2a2e39]"><Grip size={12} className="text-[#50535e]" /></span>
        {[
          <svg key="a" width="24" height="24" viewBox="0 0 24 24" fill="none" stroke="currentColor"><path d="M4 20c0-5 3-11 7-12 2 3 3 7 1 12zM14 9c2 1 5-1 7-5" /></svg>,
          <svg key="b" width="24" height="24" viewBox="0 0 24 24" fill="none" stroke="currentColor"><path d="M2 12h7M15 12h7" /><circle cx="12" cy="12" r="2.5" /></svg>,
          <svg key="c" width="24" height="24" viewBox="0 0 24 24" fill="none" stroke="currentColor"><path d="M6 12h16" /><circle cx="4" cy="12" r="2" /></svg>,
          <svg key="d" width="24" height="24" viewBox="0 0 24 24" fill="none" stroke="currentColor"><path d="M6 18L18 6" /><circle cx="5" cy="19" r="2" /><path d="M19 3l1 7-7-2z" fill="currentColor" /></svg>,
          <svg key="e" width="24" height="24" viewBox="0 0 24 24" fill="none" stroke="currentColor"><path d="M4 16L13 6M10 20l9-10" /><circle cx="4" cy="17" r="2" /><circle cx="14" cy="5" r="2" /><circle cx="20" cy="9" r="2" /><circle cx="9" cy="20" r="2" /></svg>,
          <svg key="f" width="24" height="24" viewBox="0 0 24 24" fill="none" stroke="currentColor"><path d="M6 18L18 6" /><circle cx="5" cy="19" r="2" /><circle cx="19" cy="5" r="2" /></svg>,
          <svg key="g" width="24" height="24" viewBox="0 0 24 24" fill="none" stroke="#2962ff"><path d="M12 2v8M12 14v8M2 12h8M14 12h8" /></svg>,
        ].map((n, i) => (
          <span key={i} className={i < 6 ? "flex h-full w-[39px] items-center justify-center border-r border-[#2a2e39]" : "flex h-full w-[39px] items-center justify-center"}>{n}</span>
        ))}
      </div>
    </div>
  );
}

function RangeBar() {
  return (
    <div className="flex h-[39px] shrink-0 items-center bg-[#131722] pl-[16px] pr-[15px] text-[14px] text-[#d1d4dc]">
      <div className="flex gap-[14px]">
        {["1D", "5D", "1M", "3M", "6M", "YTD", "1Y", "5Y", "All"].map((t) => <span key={t}>{t}</span>)}
      </div>
      <span className="ml-[15px] h-[24px] w-[1px] bg-[#2a2e39]" />
      <CalendarArrowUp size={20} strokeWidth={1} className="ml-[15px]" />
      <span className="ml-auto">10:39:34 (UTC-8)</span>
      <span className="ml-[22px]">RTH</span>
      <span className="ml-[16px] h-[24px] w-[1px] bg-[#2a2e39]" />
      <span className="ml-[16px]">adj</span>
      <span className="ml-[16px]">%</span>
      <span className="ml-[18px]">log</span>
      <span className="ml-[14px]">auto</span>
    </div>
  );
}

function BottomPanel() {
  return (
    <div className="flex h-[85px] shrink-0 flex-col bg-[#131722] text-[#d1d4dc]">
      <div className="flex h-[39px] shrink-0 items-center border-b-2 border-[#2a2e39] pl-[15px] pr-[12px] text-[14.5px]">
        <span>Stock Screener</span>
        <ChevronDown size={12} className="ml-[7px]" />
        <span className="ml-[16px]">Pine Editor</span>
        <span className="ml-[30px]">Strategy Tester</span>
        <span className="ml-[31px] text-[#2962ff]">Trading Panel</span>
        <Minus size={16} strokeWidth={1} className="ml-auto" />
        <Maximize size={18} strokeWidth={1} className="ml-[19px]" />
      </div>
      <div className="flex flex-1 items-end justify-center overflow-hidden pb-[1px] text-[16px] leading-[20px] whitespace-nowrap">
        <span>Choose your broker and log into your broker account. You can find</span>
      </div>
    </div>
  );
}

function TradingWindow() {
  return (
    <div className="flex h-[1080px] w-[1920px] shrink-0 flex-col bg-[#2a2e39] [font-family:Roboto,sans-serif]">
      <TvTabBar />
      <div className="h-[3px] shrink-0 bg-[#1e222d]" />
      <TvToolbar />
      <div className="h-[4px] shrink-0" />
      <div className="flex h-[996px] shrink-0 pb-[3px]">
        <LeftRail />
        <div className="ml-[4px] flex w-[1505px] shrink-0 flex-col">
          <ChartPanel />
          <RangeBar />
          <div className="h-[4px] shrink-0" />
          <BottomPanel />
        </div>
        <div className="w-[6px] shrink-0" />
        <Watchlist />
        <div className="w-[1px] shrink-0" />
        <RightRail />
      </div>
    </div>
  );
}

/* ---------- browser ---------- */
function Shield() {
  return (
    <svg width="16" height="18" viewBox="0 0 16 18"><path d="M8 0l7 2.5-1 9.5L8 18 2 12 1 2.5z" fill="#dd3030" /><path d="M6 6L4 9l2 3M10 6l2 3-2 3" fill="none" stroke="#fff" strokeWidth="1.2" /></svg>
  );
}
const gh = <FaGithub size={17} className="text-white" />;
const db = <Database size={16} strokeWidth={2} className="text-[#c8c8c8]" />;
const tabs: [React.ReactNode, string][] = [
  [<FaChrome key="c" size={17} className="text-white" />, "New Tab"],
  [<Shield key="a" />, "SQL Practice |"],
  [db, "SQLBolt - Lea"],
  [db, "SQLBolt - Lea"],
  [<Shield key="b" />, "Engineering R"],
  [<Shield key="d" />, "Get Started w"],
  [<Shield key="e" />, "Set Up | code"],
  [<span key="w" className="text-[13px] font-bold leading-none text-[#0fa968]">W³</span>, "Python Opera"],
  [<FcGoogle key="g" size={17} />, "strict equality"],
  [gh, "reading-notes"],
  [gh, "reading-notes"],
  [<FaTwitch key="t" size={16} className="text-[#9146ff]" />, "kiakili - Twitch"],
];

const marks: [React.ReactNode, string, string][] = [
  [<span key="1" className="text-[15px] font-bold leading-none text-[#ea4335]">M</span>, "Gmail", "w-[71px]"],
  [<FaYoutube key="2" size={16} className="text-[#ff0000]" />, "YouTube", "w-[86px]"],
  [<SiGooglemaps key="3" size={15} className="text-[#34a853]" />, "Maps", "w-[70px]"],
  [<span key="4" className="text-[10px] font-bold leading-none text-white">CAS</span>, "Login - CAS – Centr...", "w-[153px]"],
  [<span key="5" className="flex h-[16px] w-[16px] items-center justify-center bg-white text-[11px] font-bold leading-none text-[#1a6fb5]">S</span>, "Login to ctcLink / A...", "w-[152px]"],
  [<Star key="6" size={15} fill="#fff" className="text-white" />, "What's Trading on...", "w-[145px]"],
  [<span key="7" className="h-[15px] w-[15px] rounded-full border-[3px] border-[#ff9800]" />, "SEC Form 4 Insider...", "w-[148px]"],
  [<span key="8" className="flex h-[16px] w-[16px] items-center justify-center rounded-full bg-[#3b82f6] text-[11px] font-bold leading-none text-white">f</span>, "Stock Screener - Ov...", "w-[153px]"],
  [<span key="9" className="h-[14px] w-[8px] rounded-full bg-[#c62828]" />, "UFC 279: Diaz vs. Fe...", "w-[154px]"],
  [<span key="10" className="flex h-[16px] w-[16px] items-center justify-center rounded-full border border-[#f5a623] text-[11px] leading-none text-[#f5a623]">C</span>, "How to Write a Git...", "w-[148px]"],
  [<span key="11" className="flex h-[16px] w-[16px] items-center justify-center bg-[#f68b1e] text-[9px] font-bold leading-none text-white">SP</span>, "Understanding The...", "w-[149px]"],
  [<X key="12" size={14} strokeWidth={3} className="text-[#e53935]" />, "Top 10 Interview Q...", "w-[149px]"],
  [<span key="13" className="h-[15px] w-[15px] rounded-full border-2 border-dotted border-[#1e88c9]" />, "JavaScript — The C...", "w-[150px]"],
  [<FaReact key="14" size={16} className="text-[#61dafb]" />, "Forms – React", "w-[130px]"],
];

function BrowserChrome() {
  return (
    <div className="flex h-[102px] shrink-0 flex-col border-b border-[#4a4a4a] bg-[#000] text-[#dcdcdc]">
      <div className="flex h-[33px] shrink-0 items-end bg-[#121212] pl-[10px] text-[12.5px]">
        {tabs.map(([l, t], i) => (
          <div key={i} className={i === 2 ? "flex h-[33px] w-[137px] shrink-0 items-center rounded-t-[8px] bg-[#333333] pl-[9px] pr-[7px]" : "flex h-[33px] w-[137px] shrink-0 items-center rounded-t-[8px] bg-[#202020] pl-[9px] pr-[7px]"}>
            <span className="flex w-[16px] shrink-0 items-center justify-center">{l}</span>
            <span className="ml-[8px] overflow-hidden whitespace-nowrap">{t}</span>
            <X size={12} strokeWidth={2} className="ml-auto" />
          </div>
        ))}
        <div className="ml-[10px] mb-[4px] flex h-[26px] w-[26px] items-center justify-center rounded-full bg-[#1d1d1d]"><Plus size={15} strokeWidth={2} /></div>
        <div className="mb-[8px] ml-auto flex items-center pr-[16px]">
          <ChevronDown size={14} strokeWidth={1} />
          <Minus size={12} className="ml-[34px]" />
          <Copy size={12} className="ml-[34px]" />
          <X size={16} strokeWidth={1} className="ml-[31px]" />
        </div>
      </div>
      <div className="flex h-[33px] shrink-0 items-center bg-[linear-gradient(#303030,#161616)] pb-[1px] pl-[12px]">
        <ArrowLeft size={19} strokeWidth={2} />
        <ArrowRight size={19} strokeWidth={2} className="ml-[13px] text-[#777]" />
        <RotateCw size={16} strokeWidth={2} className="ml-[14px]" />
        <div className="ml-[14px] flex h-[29px] w-[1720px] items-center rounded-full bg-[#333333] pl-[13px] text-[14px]">
          <Lock size={12} fill="#aaa" className="text-[#aaa]" />
          <span className="ml-[9px] text-[#e8e8e8]">sqlbolt.com</span>
          <span className="text-[#9b9b9b]">/lesson/select_queries_with_aggregates</span>
          <Share size={15} strokeWidth={1} className="ml-auto text-[#ccc]" />
          <Star size={15} strokeWidth={1.4} className="ml-[16px] mr-[15px] text-[#ccc]" />
        </div>
        <Puzzle size={16} fill="#fff" className="ml-[6px] text-white" />
        <PanelRightOpen size={16} strokeWidth={2.5} className="ml-[16px] text-white" />
        <span className="ml-[14px] flex h-[22px] w-[22px] items-center justify-center rounded-full bg-[#c2185b] text-[11px] text-white">E</span>
        <EllipsisVertical size={16} strokeWidth={2.5} className="ml-[14px]" />
      </div>
      <div className="flex flex-1 items-center bg-[linear-gradient(#0c0c0c,#000)] pl-[14px] text-[12.5px] text-[#c8c8c8]">
        {marks.map(([l, t, w], i) => (
          <div key={i} className={`flex shrink-0 items-center whitespace-nowrap ${w}`}>
            <span className="flex w-[16px] shrink-0 items-center justify-center overflow-hidden">{l}</span>
            <span className="ml-[8px]">{t}</span>
          </div>
        ))}
        <ChevronsRight size={14} strokeWidth={2.5} className="ml-auto mr-[16px] text-white" />
      </div>
    </div>
  );
}

function Check() {
  return <span className="ml-[10px] text-[#8fc99a]">✓</span>;
}

function Page() {
  return (
    <div className="relative flex min-h-0 flex-1 flex-col overflow-hidden bg-[#ece8e4] [font-family:'Open_Sans',sans-serif]">
      <div className="absolute bottom-0 right-0 top-0 flex w-[17px] justify-center bg-[#f1f1f1] pt-[8px] text-[8px] leading-none text-[#505050]">▲</div>
      <div className="ml-[367px] flex h-[821px] w-[1170px] shrink-0 flex-col bg-[#f5f4f0] shadow-[0_0_24px_rgba(0,0,0,0.08)]">
        <div className="h-[132px] shrink-0 pl-[26px]">
          <div className="flex h-[31px] w-[818px] items-center border-b-[3px] border-l-[3px] border-[#ebe9e0] pl-[10px] text-[22px] text-[#333]">Exercise</div>
          <p className="mt-[11px] w-[1110px] text-[16px] leading-[24.5px] text-[#222]">
            For this exercise, we are going to work with our <b>Employees</b> table. Notice how the rows in this table have<br />
            shared data, which will give us an opportunity to use aggregate functions to summarize some high-level<br />
            metrics about the teams. Go ahead and give it a shot.
          </p>
        </div>
        <div className="flex h-[594px] shrink-0 flex-col bg-[#efece5] pl-[26px]">
          <div className="flex h-[58px] shrink-0 items-end pb-[8px] text-[14px] text-[#777]">Table: Employees</div>
          <div className="flex h-[509px] w-[1116px] shrink-0 shadow-[0_0_0_1px_#e8e6dc]">
            <div className="flex w-[744px] shrink-0 flex-col">
              <div className="flex h-[355px] shrink-0">
                <div className="flex w-[727px] shrink-0 flex-col bg-[#eae9e1] text-[14px] text-[#333]">
                  <div className="flex h-[35px] shrink-0 items-center bg-[#dcdbcf] pl-[6px] font-bold"><span className="w-[206px]">Building</span><span>Sum(Years_EMPLOYED)</span></div>
                  <div className="flex h-[32px] shrink-0 items-center border-b-2 border-[#e0dfd6] pl-[6px]"><span className="w-[206px]">1e</span><span>29</span></div>
                  <div className="flex h-[31px] shrink-0 items-center bg-[#fafaf8] pl-[6px]"><span className="w-[206px]">2w</span><span>36</span></div>
                </div>
                <div className="flex w-[17px] shrink-0 flex-col items-center justify-between bg-[#f1f1f1] py-[6px] text-[8px] leading-none text-[#a3a3a3]"><span>▲</span><span>▼</span></div>
              </div>
              <div className="relative flex-1 bg-white pl-[17px] pt-[10px] text-[15.4px] leading-[20px] text-[#222] [font-family:'Liberation_Mono',monospace]">
                <div><span className="text-[#2e5d9e]">SELECT</span> building, sum(years_EMPLOYED) <span className="text-[#2e5d9e]">FROM</span> employees</div>
                <div><span className="text-[#2e5d9e]">GROUP BY</span> building;</div>
                <span className="absolute bottom-[9px] right-[12px] text-[12px] text-[#cfcac6] [font-family:'Open_Sans',sans-serif]">RESET</span>
              </div>
            </div>
            <div className="flex flex-1 flex-col bg-[#e1e0d5]">
              <div className="flex h-[440px] shrink-0 flex-col pl-[18px] pr-[9px] text-[14px] text-[#8d8d85]">
                <div className="mt-[21px] text-[18px] leading-[24px] text-[#77776f]">Exercise 10 — Tasks</div>
                <div className="mt-[13px] flex"><span className="w-[19px] shrink-0 text-[#666]">1.</span><div className="flex-1 border-b border-[#d3d2c6] pb-[4px] leading-[22px]">Find the longest time that an employee has<br />been at the studio<Check /></div></div>
                <div className="mt-[5px] flex"><span className="w-[19px] shrink-0 text-[#666]">2.</span><div className="flex-1 border-b border-[#d3d2c6] pb-[4px] leading-[22px]">For each role, find the average number of<br />years employed by employees in that role<Check /></div></div>
                <div className="mt-[5px] flex"><span className="w-[19px] shrink-0 text-[#666]">3.</span><div className="flex-1 leading-[22px]">Find the total number of employee years<br />worked in each building<Check /></div></div>
                <div className="mt-auto mb-[15px] text-[13px] leading-[20px]">
                  <div>Stuck? Read this task's <span className="text-[#2962ff]">Solution</span>.</div>
                  <div>Solve all tasks to continue to the next lesson.</div>
                </div>
              </div>
              <div className="flex flex-1 items-center justify-center bg-[#3ab54a] text-[18px] text-white">Continue ›</div>
            </div>
          </div>
        </div>
        <div className="flex h-[95px] shrink-0 justify-between pl-[26px] pr-[27px] pt-[16px] text-[14px] leading-[21px] text-[#777]">
          <div>
            <div>Next – <span className="text-[#2d5ce6]">SQL Lesson 11: Queries with aggregates (Pt. 2)</span></div>
            <div>Previous – <span className="text-[#2d5ce6]">SQL Lesson 9: Queries with expressions</span></div>
          </div>
          <div className="text-right">
            <div>Find SQLBolt useful? Please consider</div>
            <div><span className="text-[#2d5ce6]">Donating ($4) via Paypal</span> to support our site.</div>
          </div>
        </div>
      </div>
      <div className="relative ml-[322px] mt-[30px] flex h-[125px] w-[1200px] shrink-0 overflow-hidden bg-[#101f3c] pl-[52px] pt-[45px]">
        <svg width="44" height="48" viewBox="0 0 44 48" stroke="#fff" strokeWidth="2" className="shrink-0">
          <path d="M22 16v16M14 24h16M22 0v10M17 5h10M22 38v10M17 43h10M4 17v14M0 24h9M40 17v14M35 24h9M9 7v10M4 12h10M35 7v10M30 12h10M9 31v10M4 36h10M35 31v10M30 36h10" />
        </svg>
        <span className="ml-[10px] mt-[2px] text-[28px] leading-[38px] tracking-[7px] text-white [font-family:'Liberation_Sans',sans-serif]">+ableau</span>
        <div className="absolute right-0 top-[1px] flex h-[15px] w-[32px] bg-white text-[12px] leading-none text-[#00aecd]"><span className="flex w-[16px] items-center justify-center border-r border-[#ddd]">▷</span><span className="flex w-[16px] items-center justify-center"><X size={12} strokeWidth={1.5} /></span></div>
        <span className="absolute bottom-0 left-[1081px] h-[47px] w-[14px] rounded-t-full bg-[#f47b20]" />
        <span className="absolute bottom-0 left-[1126px] h-[32px] w-[14px] rounded-t-full bg-[#5e3a26]" />
      </div>
    </div>
  );
}

function BrowserWindow() {
  return (
    <div className="flex h-[1080px] w-[1920px] shrink-0 flex-col [font-family:'Noto_Sans',sans-serif]">
      <BrowserChrome />
      <Page />
      <div className="h-[2px] shrink-0 bg-[#202020]" />
    </div>
  );
}

export default function App() {
  return (
    <div className="flex h-[1080px] w-[3840px] overflow-hidden">
      <TradingWindow />
      <BrowserWindow />
    </div>
  );
}
